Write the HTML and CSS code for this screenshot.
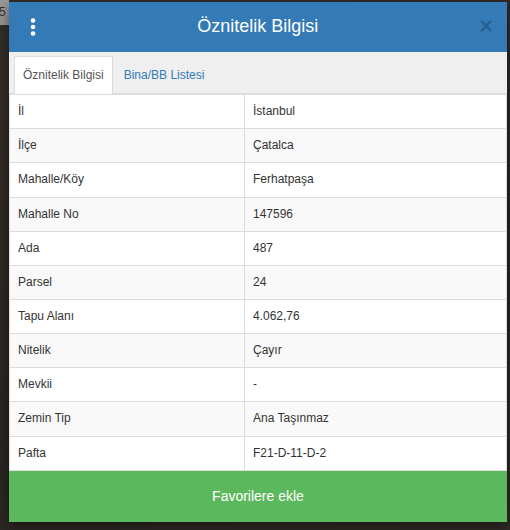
FILE: index.html
```html
<!DOCTYPE html>
<html>
<head>
  <title>Öznitelik Bilgisi</title>
  <link rel="stylesheet" href="styles.css">
</head>
<body>
  <div class="map-scale">5</div>

  <div class="panel">
    <div class="panel-head">
      <button class="menu-btn" type="button">
        <svg width="6" height="18" viewBox="0 0 6 18">
          <circle cx="3" cy="2.5" r="2.3" fill="#fff"/>
          <circle cx="3" cy="9" r="2.3" fill="#fff"/>
          <circle cx="3" cy="15.5" r="2.3" fill="#fff"/>
        </svg>
      </button>
      <h4 class="panel-title">Öznitelik Bilgisi</h4>
      <button class="close" type="button">&times;</button>
    </div>

    <div class="tabs">
      <a class="tab active">Öznitelik Bilgisi</a>
      <a class="tab">Bina/BB Listesi</a>
    </div>

    <table class="attr-table">
      <tr><td>İl</td><td>İstanbul</td></tr>
      <tr><td>İlçe</td><td>Çatalca</td></tr>
      <tr><td>Mahalle/Köy</td><td>Ferhatpaşa</td></tr>
      <tr><td>Mahalle No</td><td>147596</td></tr>
      <tr><td>Ada</td><td>487</td></tr>
      <tr><td>Parsel</td><td>24</td></tr>
      <tr><td>Tapu Alanı</td><td>4.062,76</td></tr>
      <tr><td>Nitelik</td><td>Çayır</td></tr>
      <tr><td>Mevkii</td><td>-</td></tr>
      <tr><td>Zemin Tip</td><td>Ana Taşınmaz</td></tr>
      <tr><td>Pafta</td><td>F21-D-11-D-2</td></tr>
    </table>

    <button class="fav-btn" type="button">Favorilere ekle</button>
  </div>
</body>
</html>
```

FILE: styles.css
```css
* { box-sizing: border-box; margin: 0; padding: 0; }

body {
  font-family: "Liberation Sans", Arial, sans-serif;
  font-size: 12px;
  line-height: 1.428571;
  color: #333;
  background: linear-gradient(160deg, #35302c, #2a2623 60%, #302b27);
  height: 530px;
  overflow: hidden;
  padding: 2px 0 0 9px;
}

/* bit of the map control peeking out behind the panel */
.map-scale {
  position: absolute;
  left: 0;
  top: 0;
  width: 9px;
  height: 25px;
  background: #9c9a98;
  color: #333;
  font-size: 12px;
  line-height: 24px;
  overflow: hidden;
  text-indent: -1px;
}

.panel {
  position: relative;
  width: 498px;
  background: #fff;
  box-shadow: 0 4px 14px rgba(0,0,0,0.5);
}

.panel-head {
  display: flex;
  align-items: center;
  height: 50px;
  background: #337ab7;
  padding: 0 14px 0 21px;
}

.menu-btn {
  background: none;
  border: none;
  width: 6px;
  height: 18px;
  display: flex;
  margin-top: -1px;
}

.panel-title {
  flex: 1;
  text-align: center;
  color: #fff;
  font-size: 18px;
  font-weight: normal;
}

.close {
  background: none;
  border: none;
  font-family: "Liberation Sans", Arial, sans-serif;
  font-size: 23px;
  font-weight: bold;
  line-height: 1;
  color: #000;
  opacity: 0.2;
  margin-top: -1px;
}

.tabs {
  display: flex;
  gap: 2px;
  background: #efefef;
  padding: 4px 5px 0;
  border-bottom: 1px solid #ddd;
}

.tab {
  display: block;
  padding: 10px 8px;
  border: 1px solid transparent;
  border-bottom: none;
  color: #337ab7;
  margin-bottom: -1px;
}

.tab.active {
  background: #fff;
  color: #555;
  border-color: #ddd;
}

.attr-table {
  width: 100%;
  border-collapse: collapse;
  border: 1px solid #ddd;
}

.attr-table td {
  padding: 8px;
  border: 1px solid #ddd;
  vertical-align: top;
}

.attr-table td:first-child { width: 235px; }

.attr-table tr:nth-child(even) { background: #f9f9f9; }

.fav-btn {
  display: block;
  width: 100%;
  height: 51px;
  border: none;
  background: #5cb85c;
  color: #fff;
  font-family: "Liberation Sans", Arial, sans-serif;
  font-size: 14px;
}
```
